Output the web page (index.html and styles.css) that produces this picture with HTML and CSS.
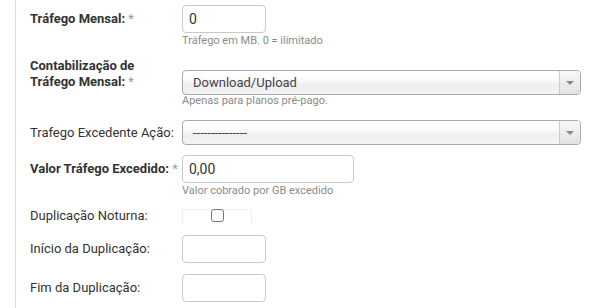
FILE: index.html
```html
<!DOCTYPE html>
<html lang="pt-BR">
<head>
    <meta charset="UTF-8">
    <title>Plano - Tráfego</title>
    <link rel="stylesheet" href="styles.css">
</head>
<body>

    <div class="panel">
        <form class="plan-form">

            <!-- Trafego mensal -->
            <div class="row row-first">
                <label class="label required" for="trafego">Tráfego Mensal: <span class="star">*</span></label>
                <div class="field">
                    <input type="text" id="trafego" class="input input-small" value="0">
                    <div class="help">Tráfego em MB. 0 = ilimitado</div>
                </div>
            </div>

            <div class="row row-wide">
                <label class="label required label-2lines">Contabilização de<br>Tráfego Mensal: <span class="star">*</span></label>
                <div class="field">
                    <div class="select">
                        <span class="select-text">Download/Upload</span>
                        <span class="select-arrow"><i></i></span>
                    </div>
                    <div class="help help-select">Apenas para planos pré-pago.</div>
                </div>
            </div>

            <div class="row row-after-select">
                <label class="label label-select">Trafego Excedente Ação:</label>
                <div class="field">
                    <div class="select">
                        <span class="select-text">---------------</span>
                        <span class="select-arrow"><i></i></span>
                    </div>
                </div>
            </div>

            <div class="row">
                <label class="label required" for="valor">Valor Tráfego Excedido: <span class="star">*</span></label>
                <div class="field">
                    <input type="text" id="valor" class="input input-medium" value="0,00">
                    <div class="help">Valor cobrado por GB excedido</div>
                </div>
            </div>

            <div class="row row-loose">
                <label class="label label-check" for="noturna">Duplicação Noturna:</label>
                <div class="field">
                    <div class="check-box">
                        <input type="checkbox" id="noturna" class="checkbox">
                    </div>
                </div>
            </div>

            <div class="row row-loose">
                <label class="label" for="inicio">Início da Duplicação:</label>
                <div class="field">
                    <input type="text" id="inicio" class="input input-small">
                </div>
            </div>

            <div class="row row-loose">
                <label class="label" for="fim">Fim da Duplicação:</label>
                <div class="field">
                    <input type="text" id="fim" class="input input-small">
                </div>
            </div>

        </form>
    </div>

</body>
</html>
```

FILE: styles.css
```css
body {
    margin: 0;
    background-color: #fff;
    font-family: Roboto, "Liberation Sans", Arial, sans-serif;
    color: #333;
}

.panel {
    margin-left: 15px;
    border-left: 1px solid #dcdcdc;
    min-height: 100vh;
    padding-left: 14px;
    box-sizing: border-box;
}

.plan-form {
    padding-top: 5px;
}

.row {
    display: flex;
    align-items: flex-start;
    margin-top: 10px;
}

.row-first {
    margin-top: 0;
}

.row-wide {
    margin-top: 22px;
}

.row-after-select {
    margin-top: 12px;
}

.row-loose {
    margin-top: 11px;
}

.label {
    width: 152px;
    flex-shrink: 0;
    font-size: 13px;
    line-height: 28px;
    color: #333;
}

.required {
    font-weight: bold;
}

.star {
    font-weight: normal;
    color: #999;
}

.label-2lines {
    line-height: 16px;
    margin-top: -12px;
}

.label-select {
    line-height: 25px;
}

.label-check {
    line-height: 14px;
}

.input {
    display: block;
    height: 28px;
    box-sizing: border-box;
    border: 1px solid #c8c8c8;
    border-radius: 4px;
    padding: 0 6px;
    font-family: inherit;
    font-size: 14px;
    color: #333;
    margin: 0;
}

.input-small {
    width: 84px;
}

.input-medium {
    width: 172px;
}

.help {
    font-size: 11px;
    line-height: 14px;
    color: #8a8a8a;
    margin-top: 1px;
}

.help-select {
    margin-top: -1px;
}

/* select estilo chosen */
.select {
    width: 399px;
    height: 25px;
    box-sizing: border-box;
    border: 1px solid #aaa;
    border-radius: 4px;
    background: linear-gradient(#fff 20%, #f6f6f6 50%, #eee 52%, #f4f4f4 100%);
    display: flex;
    align-items: center;
    overflow: hidden;
}

.select-text {
    flex-grow: 1;
    padding-left: 10px;
    font-size: 13px;
    color: #444;
}

.select-arrow {
    width: 20px;
    height: 100%;
    border-left: 1px solid #ccc;
    background: linear-gradient(#f8f8f8, #e2e2e2);
    display: flex;
    align-items: center;
    justify-content: center;
}

.select-arrow i {
    width: 0;
    height: 0;
    border-left: 4px solid transparent;
    border-right: 4px solid transparent;
    border-top: 4px solid #888;
}

.check-box {
    width: 70px;
    height: 15px;
    border: 1px solid #f0f0f0;
    border-bottom: none;
    box-sizing: border-box;
    display: flex;
    justify-content: center;
}

.checkbox {
    appearance: none;
    width: 13px;
    height: 13px;
    margin: -1px 0 0 0;
    border: 1px solid #777;
    border-radius: 3px;
    background: #fff;
}
```
